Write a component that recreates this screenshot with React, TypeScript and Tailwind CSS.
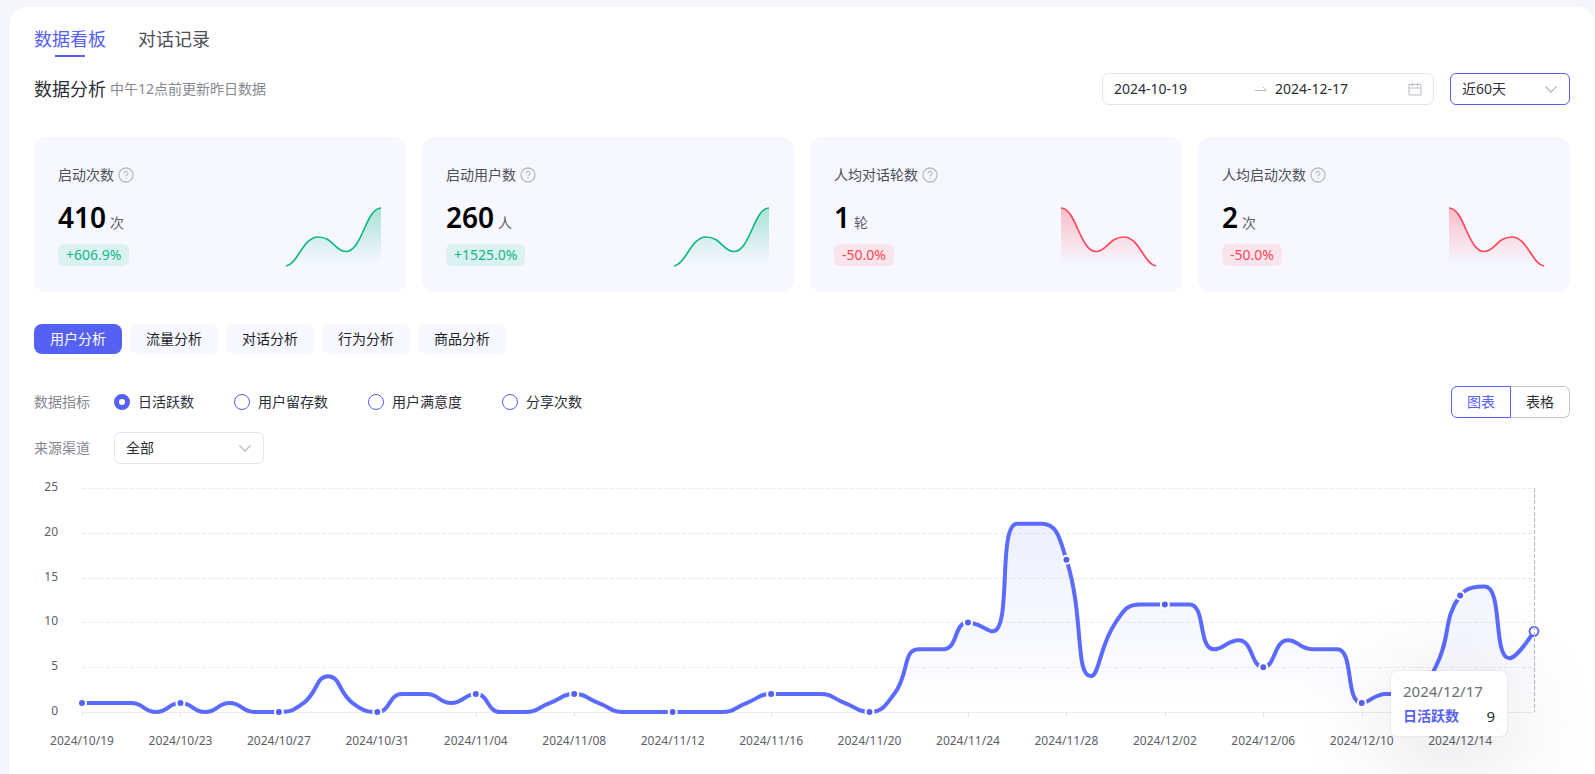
import React, { useEffect, useRef, useState } from 'react';

interface StatCard {
  label: string;
  value: string;
  unit: string;
  change: string;
  trend: 'up' | 'down';
}

interface Point {
  x: number;
  y: number;
}

const STATS: StatCard[] = [
  { label: '启动次数', value: '410', unit: '次', change: '+606.9%', trend: 'up' },
  { label: '启动用户数', value: '260', unit: '人', change: '+1525.0%', trend: 'up' },
  { label: '人均对话轮数', value: '1', unit: '轮', change: '-50.0%', trend: 'down' },
  { label: '人均启动次数', value: '2', unit: '次', change: '-50.0%', trend: 'down' },
];

const ANALYSIS_TABS = ['用户分析', '流量分析', '对话分析', '行为分析', '商品分析'];
const METRICS = ['日活跃数', '用户留存数', '用户满意度', '分享次数'];

// Daily active users, 2024/10/19 - 2024/12/17
const DAILY_ACTIVE = [
  1, 1, 1, 0, 1, 0, 1, 0, 0, 1, 4, 1, 0, 2, 2, 1, 2, 0, 0, 1,
  2, 1, 0, 0, 0, 0, 0, 1, 2, 2, 2, 1, 0, 2, 7, 7, 10, 9, 21, 21,
  17, 4, 10, 12, 12, 12, 7, 8, 5, 8, 7, 7, 1, 2, 2, 5, 13, 14, 6, 9,
];

const CHART_HEIGHT = 284;
const PLOT_TOP = 12;
const PLOT_HEIGHT = 224;
const PLOT_LEFT = 48;
const PLOT_RIGHT = 36;
const Y_MAX = 25;
const Y_TICKS = [0, 5, 10, 15, 20, 25];
const LABEL_STEP = 4;

function formatDay(index: number): string {
  const d = new Date(2024, 9, 19 + index);
  const mm = String(d.getMonth() + 1).padStart(2, '0');
  const dd = String(d.getDate()).padStart(2, '0');
  return `${d.getFullYear()}/${mm}/${dd}`;
}

const clamp = (v: number, a: number, b: number) => Math.max(Math.min(v, Math.max(a, b)), Math.min(a, b));

// Bezier smoothing whose control points never leave the box of a segment
function smoothPath(points: Point[], smooth = 0.5): string {
  let d = `M${points[0].x},${points[0].y}`;
  let cp0: Point = points[0];
  for (let i = 1; i < points.length; i++) {
    const prev = points[i - 1];
    const cur = points[i];
    const next = points[i + 1];
    let cp1: Point = cur;
    let nextCp0: Point = cur;
    if (next) {
      const lenPrev = Math.hypot(cur.x - prev.x, cur.y - prev.y);
      const lenNext = Math.hypot(next.x - cur.x, next.y - cur.y);
      const ratio = lenNext / (lenNext + lenPrev);
      const nx = clamp(cur.x + (next.x - prev.x) * smooth * ratio, cur.x, next.x);
      const ny = clamp(cur.y + (next.y - prev.y) * smooth * ratio, cur.y, next.y);
      cp1 = {
        x: clamp(cur.x - ((nx - cur.x) * lenPrev) / lenNext, prev.x, cur.x),
        y: clamp(cur.y - ((ny - cur.y) * lenPrev) / lenNext, prev.y, cur.y),
      };
      nextCp0 = {
        x: cur.x + ((cur.x - cp1.x) * lenNext) / lenPrev,
        y: cur.y + ((cur.y - cp1.y) * lenNext) / lenPrev,
      };
    }
    d += `C${cp0.x},${cp0.y} ${cp1.x},${cp1.y} ${cur.x},${cur.y}`;
    cp0 = nextCp0;
  }
  return d;
}

const HelpIcon = () => (
  <svg width="16" height="16" viewBox="0 0 16 16" fill="none" stroke="#b9bbc4" aria-hidden="true">
    <circle cx="8" cy="8" r="7" strokeWidth="1.3" />
    <path d="M6 6.4a2 2 0 1 1 3 1.7c-.7.4-1 .7-1 1.5" strokeWidth="1.1" />
    <path d="M8 10.7v1.2" strokeWidth="1.2" />
  </svg>
);

const ChevronIcon = () => (
  <svg
    className="pointer-events-none absolute right-3 top-[9px]"
    width="14"
    height="14"
    viewBox="0 0 14 14"
    fill="none"
    stroke="#b9bbc4"
    strokeWidth="1.3"
    aria-hidden="true"
  >
    <path d="M1.5 4.500 7 10l5.500-5.500" />
  </svg>
);

const Sparkline: React.FC<{ trend: StatCard['trend'] }> = ({ trend }) => {
  const up = 'M0 59C12 57 17 30 32 30c15 0 17 14.500 28 14.500C76 44.500 80 1 95 1';
  const down = 'M0 1C15 1 19 44.500 35 44.500c11 0 13-14.500 28-14.500 15 0 20 27 32 29';
  const d = trend === 'up' ? up : down;
  const color = trend === 'up' ? '#13b886' : '#ff4757';
  const fillId = `spark-${trend}`;
  return (
    <svg
      width="96"
      height="61"
      viewBox={trend === 'up' ? '0 0 96 61' : '1 0 96 61'}
      className="overflow-visible"
      fill="none"
      aria-hidden="true"
    >
      <defs>
        <linearGradient id={fillId} x1="0" y1="0" x2="0" y2="1">
          <stop offset="0" stopColor={color} stopOpacity="0.33" />
          <stop offset="0.95" stopColor={color} stopOpacity="0" />
        </linearGradient>
      </defs>
      <path d={`${d}V60H0Z`} fill={`url(#${fillId})`} />
      <path d={d} stroke={color} strokeWidth="1.7" />
    </svg>
  );
};

const ActiveChart: React.FC = () => {
  const boxRef = useRef<HTMLDivElement>(null);
  const [width, setWidth] = useState(1536);

  useEffect(() => {
    const box = boxRef.current;
    if (!box) return;
    const observer = new ResizeObserver(() => setWidth(box.clientWidth));
    observer.observe(box);
    return () => observer.disconnect();
  }, []);

  const plotWidth = width - PLOT_LEFT - PLOT_RIGHT;
  const right = width - PLOT_RIGHT;
  const bottom = PLOT_TOP + PLOT_HEIGHT;
  const points = DAILY_ACTIVE.map((v, i) => ({
    x: PLOT_LEFT + (plotWidth * i) / (DAILY_ACTIVE.length - 1),
    y: bottom - (v / Y_MAX) * PLOT_HEIGHT,
  }));
  const line = smoothPath(points);
  const last = points[points.length - 1];
  const marked = points.map((p, i) => ({ ...p, i })).filter((p) => p.i % LABEL_STEP === 0);

  return (
    <div ref={boxRef} className="relative mt-3">
      <svg className="block w-full" height={CHART_HEIGHT} role="img" aria-label="日活跃数">
        <defs>
          <linearGradient id="active-fill" x1="0" y1="0" x2="0" y2="1">
            <stop offset="0" stopColor="#5b74ff" stopOpacity="0.11" />
            <stop offset="1" stopColor="#5b74ff" stopOpacity="0" />
          </linearGradient>
        </defs>

        {Y_TICKS.map((tick) => {
          const y = Math.round(bottom - (tick / Y_MAX) * PLOT_HEIGHT) + 0.5;
          return (
            <g key={tick}>
              <line
                x1={PLOT_LEFT}
                x2={right}
                y1={y}
                y2={y}
                stroke="#ebecf2"
                strokeDasharray={tick === 0 ? undefined : '4 2'}
              />
              <text x="24" y={y + 2} textAnchor="end" className="fill-[#5c5e68] text-[12px]">
                {tick}
              </text>
            </g>
          );
        })}

        {marked.map((p) => (
          <g key={p.i}>
            <line x1={Math.round(p.x) + 0.5} x2={Math.round(p.x) + 0.5} y1={bottom} y2={bottom + 5} stroke="#e6e7ee" />
            <text x={p.x} y={bottom + 33} textAnchor="middle" className="fill-[#5c5e68] text-[12px]">
              {formatDay(p.i)}
            </text>
          </g>
        ))}

        <path d={`${line}V${bottom}H${PLOT_LEFT}Z`} fill="url(#active-fill)" />
        <path d={line} fill="none" stroke="#5b6bff" strokeWidth="4" strokeLinejoin="bevel" />

        {marked.map((p) => (
          <circle key={p.i} cx={p.x} cy={p.y} r="4" fill="#5561f2" stroke="#fff" strokeWidth="2" />
        ))}

        <circle cx={last.x} cy={last.y} r="4.5" fill="#fff" stroke="#5561f2" strokeWidth="1.8" />
        <line x1={right + 0.5} x2={right + 0.5} y1={PLOT_TOP} y2={bottom} stroke="#b4b6c4" strokeDasharray="4 2" />
      </svg>

      {/* Tooltip of the hovered day */}
      <div className="absolute right-[63px] top-[195px] w-[116px] rounded-md bg-white px-3 py-2 shadow-[0_0_2px_rgba(60,60,90,0.2),0_20px_100px_rgba(50,50,80,0.18)]">
        <p className="text-[15px] leading-[25px] text-[#6b6d76]">2024/12/17</p>
        <p className="flex justify-between text-sm leading-6">
          <span className="font-bold text-[#5561f2]">日活跃数</span>
          <span className="text-[15px] text-[#2c2e38]">9</span>
        </p>
      </div>
    </div>
  );
};

export default function App() {
  const [metric, setMetric] = useState(METRICS[0]);

  return (
    <div className="min-h-screen overflow-hidden bg-[#f5f6fb] pl-[10px] pr-px pt-[7px] font-['Noto_Sans','Noto_Sans_CJK_SC',sans-serif] text-sm text-[#2c2e38]">
      <main className="min-h-[767px] rounded-t-2xl bg-white px-6 pt-5">
        {/* Page tabs */}
        <nav className="flex gap-8 text-lg leading-6">
          <a href="#board" className="relative text-[#5561f2]">
            数据看板
            <span className="absolute left-1/2 top-7 h-[2px] w-[30px] -translate-x-1/2 bg-[#5561f2]" />
          </a>
          <a href="#records" className="text-[#4c4e58]">对话记录</a>
        </nav>

        {/* Title and date range */}
        <header className="mt-[22px] flex h-8 items-center justify-between">
          <div className="flex items-center gap-1">
            <h1 className="text-lg leading-6">数据分析</h1>
            <span className="text-[#858791]">中午12点前更新昨日数据</span>
          </div>
          <div className="flex gap-4">
            <div className="flex h-8 w-[332px] items-center rounded-md border border-[#e4e5ec] px-[11px]">
              <input aria-label="开始日期" defaultValue="2024-10-19" className="min-w-0 flex-1 outline-none" />
              <svg className="mx-2" width="12" height="14" viewBox="0 0 12 14" fill="none" stroke="#b9bbc4" aria-hidden="true">
                <path d="M0 8.500h11L8 5" />
              </svg>
              <input aria-label="结束日期" defaultValue="2024-12-17" className="min-w-0 flex-1 outline-none" />
              <svg width="14" height="14" viewBox="0 0 14 14" fill="none" stroke="#b9bbc4" aria-hidden="true">
                <path d="M1 2.500h12v10.500H1zM1 6h12M4.500.500v4M9.500.500v4" />
              </svg>
            </div>
            <div className="relative">
              <select
                aria-label="时间范围"
                className="h-8 w-[120px] appearance-none rounded-md border border-[#5561f2] bg-white px-[11px] outline-none"
              >
                <option>近60天</option>
              </select>
              <ChevronIcon />
            </div>
          </div>
        </header>

        {/* Summary cards */}
        <section className="mt-8 grid grid-cols-4 gap-4">
          {STATS.map((stat) => (
            <article key={stat.label} className="flex items-end justify-between rounded-xl bg-[#f6f7ff] p-6">
              <div className="pb-[2px]">
                <h2 className="flex items-center gap-1 leading-7 text-[#4c4e58]">
                  {stat.label}
                  <HelpIcon />
                </h2>
                <p className="mt-[10px] flex h-[37px] items-baseline gap-1 leading-9">
                  <strong className="text-[28px] font-semibold text-black">{stat.value}</strong>
                  <span className="text-[#5c5e68]">{stat.unit}</span>
                </p>
                <p
                  className={`mt-2 w-fit rounded-md px-2 leading-[22px] ${
                    stat.trend === 'up' ? 'bg-[#dcf1f2] text-[#13b886]' : 'bg-[#fae5ec] text-[#ff4757]'
                  }`}
                >
                  {stat.change}
                </p>
              </div>
              <Sparkline trend={stat.trend} />
            </article>
          ))}
        </section>

        {/* Analysis tabs */}
        <div className="mt-8 flex gap-2">
          {ANALYSIS_TABS.map((tab, idx) => (
            <button
              key={tab}
              type="button"
              className={`h-[30px] rounded-lg px-4 ${idx === 0 ? 'bg-[#5561f2] text-white' : 'bg-[#f6f7ff] text-[#1d1f29]'}`}
            >
              {tab}
            </button>
          ))}
        </div>

        {/* Filters */}
        <div className="mt-8 flex h-8 items-center justify-between">
          <div className="flex items-center gap-6">
            <span id="metric-label" className="text-[#858791]">数据指标</span>
            <div role="radiogroup" aria-labelledby="metric-label" className="flex gap-10">
              {METRICS.map((name) => (
                <label key={name} className="flex items-center gap-2">
                  <input
                    type="radio"
                    name="metric"
                    checked={metric === name}
                    onChange={() => setMetric(name)}
                    className="h-4 w-4 appearance-none rounded-full border border-[#5561f2] checked:border-5"
                  />
                  {name}
                </label>
              ))}
            </div>
          </div>
          <div className="flex h-8">
            <button type="button" className="w-[60px] rounded-l-md border border-[#5561f2] text-[#5561f2]">图表</button>
            <button type="button" className="w-[59px] rounded-r-md border border-l-0 border-[#c4c5d0]">表格</button>
          </div>
        </div>
        <div className="mt-[14px] flex items-center gap-6">
          <label htmlFor="channel" className="text-[#858791]">来源渠道</label>
          <div className="relative">
            <select
              id="channel"
              className="h-8 w-[150px] appearance-none rounded-md border border-[#e4e5ec] bg-white px-[11px] outline-none"
            >
              <option>全部</option>
            </select>
            <ChevronIcon />
          </div>
        </div>

        <ActiveChart />
      </main>
    </div>
  );
}
